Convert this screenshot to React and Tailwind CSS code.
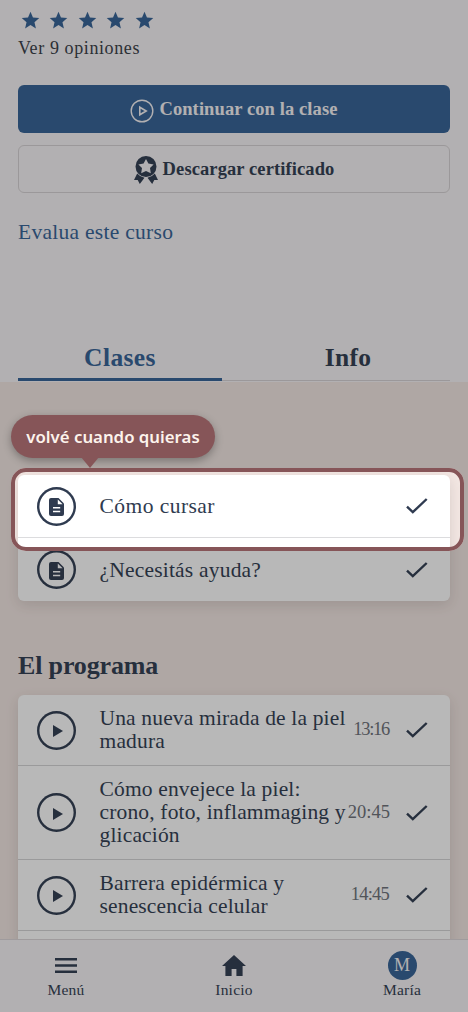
const intro = [
  { title: 'Cómo cursar', className: 'tracking-[0.45px]' },
  { title: '¿Necesitás ayuda?', className: 'tracking-[0.2px]' },
];

const program = [
  { lines: ['Una nueva mirada de la piel', 'madura'], time: '13:16', timeClass: 'tracking-[-1.3px] mr-[17px]' },
  { lines: ['Cómo envejece la piel:', 'crono, foto, inflammaging y', 'glicación'], time: '20:45', timeClass: 'mr-[16px]' },
  { lines: ['Barrera epidérmica y', 'senescencia celular'], time: '14:45', timeClass: 'tracking-[-0.8px] mr-[17px]' },
];

function Star() {
  return (
    <svg viewBox="0 0 24 24" className="w-[21px] h-[21px] fill-[#336195]">
      <path d="M12 17.270 18.180 21l-1.640-7.030L22 9.240l-7.190-.61L12 2 9.190 8.630 2 9.240l5.460 4.730L5.820 21z" />
    </svg>
  );
}

function PlayOutline() {
  return (
    <svg viewBox="0 0 24 24" className="w-[24px] h-[24px] mt-[4px]" fill="none" stroke="currentColor" strokeWidth="1.4">
      <circle cx="12" cy="12" r="10.8" />
      <path d="M9.800 8.200v7.600l6.400-3.800z" strokeWidth="1.6" />
    </svg>
  );
}

function Award() {
  return (
    <svg viewBox="0 0 24 28" className="w-[24px] h-[28px] mt-[2px]" fill="currentColor">
      <path
        fillRule="evenodd"
        d="M12 0a10.500 10.500 0 1 0 0 21 10.500 10.500 0 0 0 0-21zm0 3 2.400 4.500 5.200.9-3.600 3.700.8 5.200L12 15l-4.800 2.300.8-5.200-3.600-3.700 5.200-.9z"
      />
      <path d="M3.200 17.600 0 24.100l3.700-.2L5.800 28l4.700-6.200a12 12 0 0 1-7.300-4.200zM20.800 17.600l3.200 6.500-3.700-.2-2.100 4.100-4.700-6.200a12 12 0 0 0 7.300-4.200z" />
    </svg>
  );
}

function Check() {
  return (
    <svg viewBox="0 0 22 16" className="w-[22px] h-[16px] shrink-0" fill="none" stroke="currentColor" strokeWidth="2.4">
      <path d="M1 8.600 6.800 14.200 20.700 1" />
    </svg>
  );
}

function LessonIcon({ type }) {
  return (
    <span className="w-[39px] h-[39px] shrink-0 rounded-full flex items-center justify-center shadow-[inset_0_0_0_2.4px_#2f3b50]">
      {type === 'doc' ? (
        <svg viewBox="0 0 15 18" className="w-[15px] h-[18px] mt-[2px]">
          <path d="M2 0h7.500L15 5.500V16a2 2 0 0 1-2 2H2a2 2 0 0 1-2-2V2a2 2 0 0 1 2-2z" fill="#2f3b50" />
          <path d="M8.800 1.400v4.800h4.800zM4 9h7.200v1.500H4zM4 12.700h7.200v1.500H4z" fill="#fff" />
        </svg>
      ) : (
        <svg viewBox="0 0 10 12" className="w-[10px] h-[12px] ml-[2px] mt-[2px] fill-[#2f3b50]">
          <path d="M0 0v12l10-6z" />
        </svg>
      )}
    </span>
  );
}

function NavItem({ label, children }) {
  return (
    <div className="w-[84px] flex flex-col items-center">
      <div className="h-[30px] flex items-center justify-center">{children}</div>
      <span className="text-[15.5px] leading-[20px] tracking-[0.2px]">{label}</span>
    </div>
  );
}

export default function App() {
  return (
    <div className="relative w-[468px] h-[1012px] overflow-hidden flex flex-col bg-[#f7f4f6] font-['Liberation_Serif',serif] text-[#2f3b50]">
      <div className="flex-1 min-h-0 overflow-hidden">
        <section className="h-[382px] px-[18px] pt-[10px] flex flex-col">
          <div className="flex gap-[7.500px] pl-[1.500px]">
            {[1, 2, 3, 4, 5].map((n) => (
              <Star key={n} />
            ))}
          </div>
          <p className="mt-[6px] text-[18px] leading-[22px] tracking-[0.6px] text-[#363b45]">Ver 9 opiniones</p>
          <button className="mt-[26px] h-[48px] shrink-0 rounded-md bg-[#336195] text-[#f7f4f6] flex items-center justify-center gap-[5px] font-bold text-[18.5px]">
            <PlayOutline />
            <span className="mt-[2px] tracking-[0.1px]">Continuar con la clase</span>
          </button>
          <button className="mt-[12px] h-[48px] shrink-0 rounded-md border border-[#d6d2d4] flex items-center justify-center gap-[5px] font-bold text-[18.5px]">
            <Award />
            <span className="mt-[2px] tracking-[0.1px]">Descargar certificado</span>
          </button>
          <a className="mt-[26px] text-[21.5px] leading-[26px] tracking-[0.28px] text-[#336195]">Evalua este curso</a>
          <div className="mt-auto h-[46px] flex font-bold text-[25.5px] text-center">
            <div className="w-[204px] h-[45px] border-b-[3px] border-[#336195] text-[#336195] leading-[43px] tracking-[0.4px]">
              Clases
            </div>
            <div className="flex-1 h-[45px] pl-[24px] border-b border-[#d6d2d4] leading-[43px] tracking-[0.3px]">Info</div>
          </div>
        </section>

        <section className="bg-[#f3e7e3] px-[18px] pt-[93px] h-[700px]">
          <div className="bg-white rounded-md shadow-[0_4px_14px_rgba(60,40,40,0.14)]">
            {intro.map((lesson, i) => (
              <div
                key={lesson.title}
                className={`h-[63px] flex items-center pl-[19px] pr-[22px] text-[21.5px] ${i === 0 ? 'border-b border-[#dcdcde]' : ''}`}
              >
                <LessonIcon type="doc" />
                <span className={`ml-[23.500px] mt-px flex-1 ${lesson.className}`}>{lesson.title}</span>
                <Check />
              </div>
            ))}
          </div>

          <h2 className="mt-[50px] text-[26px] leading-[30px] font-bold tracking-[-0.15px]">El programa</h2>

          <div className="mt-[14px] bg-white rounded-md shadow-[0_4px_14px_rgba(60,40,40,0.14)]">
            {program.map((lesson) => (
              <div key={lesson.time} className="border-b border-[#d4d4d6] pl-[19px] pr-[22px] py-[12px] flex items-center">
                <LessonIcon type="video" />
                <div className="ml-[23.500px] flex-1 text-[21.5px] leading-[23px] tracking-[0.16px] whitespace-nowrap">
                  {lesson.lines.map((line) => (
                    <p key={line}>{line}</p>
                  ))}
                </div>
                <span className={`text-[18.5px] text-[#6c7078] ${lesson.timeClass}`}>{lesson.time}</span>
                <Check />
              </div>
            ))}
            <div className="h-[70px]" />
          </div>
        </section>
      </div>

      <nav className="h-[73px] shrink-0 border-t border-[#dcd6d8] bg-[#f7f4f6] px-[24px] pt-[10px] flex justify-between">
        <NavItem label="Menú">
          <svg viewBox="0 0 22 15" className="w-[22px] h-[15px] fill-current">
            <path d="M0 0h22v2.400H0zM0 6.300h22v2.400H0zM0 12.600h22V15H0z" />
          </svg>
        </NavItem>
        <NavItem label="Inicio">
          <svg viewBox="0 0 24 21" className="w-[24px] h-[21px] fill-current">
            <path d="M12 0 0 11h3.400v10h6.200v-7h4.800v7h6.200V11H24z" />
          </svg>
        </NavItem>
        <NavItem label="María">
          <span className="w-[29px] h-[29px] rounded-full bg-[#336195] text-[#f7f4f6] text-[18px] flex items-center justify-center">M</span>
        </NavItem>
      </nav>

      {/* Spotlight over the first lesson; its shadow dims everything else */}
      <div className="absolute left-[11px] top-[468px] w-[453px] h-[83px] rounded-[15px] border-[4px] border-[#865558] shadow-[0_0_0_1200px_rgba(20,20,20,0.3)]" />
      <div className="absolute left-[11px] top-[415px] w-[204px] h-[43px] pt-px rounded-full bg-[#865558] shadow-[0_3px_8px_rgba(0,0,0,0.3)] flex items-center justify-center font-['Noto_Sans',sans-serif] font-semibold text-[16.8px] text-[#fdf3ec] whitespace-nowrap">
        volvé cuando quieras
        <span className="absolute left-[70px] top-[42px] border-x-[9px] border-t-[11px] border-x-transparent border-t-[#865558]" />
      </div>
    </div>
  );
}
